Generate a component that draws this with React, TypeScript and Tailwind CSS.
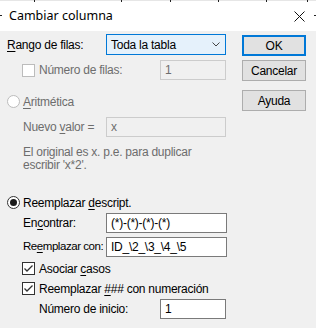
import type { ReactNode } from "react";

const font = { fontFamily: '"Liberation Sans", Arial, sans-serif' };

function CheckBox({ checked, disabled }: { checked?: boolean; disabled?: boolean }) {
  return (
    <span
      className={
        "flex h-[13px] w-[13px] shrink-0 items-center justify-center border bg-white " +
        (disabled ? "border-[#bcbcbc]" : "border-[#333333]")
      }
    >
      {checked && (
        <svg width="11" height="11" viewBox="0 0 11 11">
          <path d="M1.5 5.5 L4 8 L9.5 2.5" fill="none" stroke="#333" strokeWidth="1.3" />
        </svg>
      )}
    </span>
  );
}

function Radio({ checked, disabled }: { checked?: boolean; disabled?: boolean }) {
  return (
    <span
      className={
        "flex h-[13px] w-[13px] shrink-0 items-center justify-center rounded-full border bg-white " +
        (disabled ? "border-[#bcbcbc]" : "border-[#333333]")
      }
    >
      {checked && <span className="h-[7px] w-[7px] rounded-full bg-[#1a1a1a]" />}
    </span>
  );
}

function Field({ value, w, disabled }: { value: string; w: string; disabled?: boolean }) {
  return (
    <div
      className={
        "flex h-[20px] shrink-0 items-center border px-[4px] " +
        w +
        (disabled ? " border-[#cccccc] bg-[#f0f0f0] text-[#6d6d6d]" : " border-[#7a7a7a] bg-white text-black")
      }
    >
      {value}
    </div>
  );
}

function Btn({ children, main }: { children: ReactNode; main?: boolean }) {
  return (
    <div
      className={
        "flex h-[21px] w-[64px] items-center justify-center bg-[#e1e1e1] text-black " +
        (main ? "border-2 border-[#0078d7]" : "border border-[#adadad]")
      }
    >
      {children}
    </div>
  );
}

export default function App() {
  const ticks = [34, 121, 170, 218, 266, 307];
  return (
    <div className="relative h-[328px] w-[316px] overflow-hidden bg-[#f0f0f0]" style={font}>
      {ticks.map((x) => (
        <span key={x} className="absolute top-0 h-[2px] w-px bg-[#222]" style={{ left: x }} />
      ))}
      <span className="absolute left-0 top-[15px] h-px w-[2px] bg-[#222]" />
      <span className="absolute right-0 top-[15px] h-px w-[2px] bg-[#222]" />

      <div className="flex h-[31px] items-center justify-between border-t border-[#e6e6e6] bg-white pl-[9px] pr-[11px]">
        <span className="text-[12.5px] text-black" style={{ fontFamily: '"Noto Sans", "Open Sans", sans-serif' }}>
          Cambiar columna
        </span>
        <svg width="11" height="11" viewBox="0 0 11 11">
          <path d="M0.5 0.5 L10.5 10.5 M10.5 0.5 L0.5 10.5" stroke="#111" strokeWidth="1" />
        </svg>
      </div>

      <div className="flex whitespace-nowrap text-[12px] tracking-[-0.25px] text-black">
        <div className="flex w-[242px] flex-col pl-[7px] pt-[3px]">
          <div className="flex h-[21px] items-center">
            <span className="w-[99px]">
              <u className="underline-offset-2">R</u>ango de filas:
            </span>
            <div className="flex h-[21px] w-[120px] items-center justify-between border border-[#0078d7] bg-[#e5f1fb] pl-[4px] pr-[5px]">
              <span>Toda la tabla</span>
              <svg width="8" height="5" viewBox="0 0 8 5">
                <path d="M0.5 0.5 L4 4 L7.5 0.5" fill="none" stroke="#444" strokeWidth="1" />
              </svg>
            </div>
          </div>

          <div className="mt-[5px] flex h-[20px] items-center pl-[15px] text-[#6d6d6d]">
            <CheckBox disabled />
            <span className="ml-[4px] w-[121px]">Número de filas:</span>
            <Field value="1" w="w-[66px]" disabled />
          </div>

          <div className="mt-[15px] flex h-[13px] items-center text-[#6d6d6d]">
            <Radio disabled />
            <span className="ml-[3px]">
              <u className="underline-offset-2">A</u>ritmética
            </span>
          </div>

          <div className="mt-[9px] flex h-[20px] items-center pl-[16px] text-[#6d6d6d]">
            <span className="w-[83px]">
              Nuevo <u className="underline-offset-2">v</u>alor =
            </span>
            <Field value="x" w="w-[120px]" disabled />
          </div>

          <div className="mt-[9px] pl-[16px] leading-[13px] text-[#6d6d6d]">
            El original es x. p.e. para duplicar
            <br />
            escribir 'x*2'.
          </div>

          <div className="mt-[24px] flex h-[13px] items-center">
            <Radio checked />
            <span className="ml-[3px]">
              Reemplazar <u className="underline-offset-2">d</u>escript.
            </span>
          </div>

          <div className="mt-[4px] flex h-[20px] items-center pl-[16px]">
            <span className="w-[83px]">
              En<u className="underline-offset-2">c</u>ontrar:
            </span>
            <Field value="(*)-(*)-(*)-(*)" w="w-[121px]" />
          </div>

          <div className="mt-[4px] flex h-[20px] items-center pl-[16px]">
            <span className="w-[83px] text-[11.5px] tracking-[-0.45px]">
              Re<u className="underline-offset-2">e</u>mplazar con:
            </span>
            <Field value="ID_\2_\3_\4_\5" w="w-[121px]" />
          </div>

          <div className="mt-[5px] flex h-[13px] items-center pl-[15px]">
            <CheckBox checked />
            <span className="ml-[4px]">
              Asociar <u className="underline-offset-2">c</u>asos
            </span>
          </div>

          <div className="mt-[7px] flex h-[13px] items-center pl-[15px]">
            <CheckBox checked />
            <span className="ml-[4px]">
              Reemplazar <u className="underline-offset-2">#</u>## con numeración
            </span>
          </div>

          <div className="mt-[4px] flex h-[20px] items-center pl-[32px]">
            <span className="w-[121px]">Número de inicio:</span>
            <Field value="1" w="w-[66px]" />
          </div>
        </div>

        <div className="flex flex-col pt-[4px]">
          <Btn main>OK</Btn>
          <div className="mt-[4px]">
            <Btn>Cancelar</Btn>
          </div>
          <div className="mt-[9px]">
            <Btn>Ayuda</Btn>
          </div>
        </div>
      </div>
    </div>
  );
}
